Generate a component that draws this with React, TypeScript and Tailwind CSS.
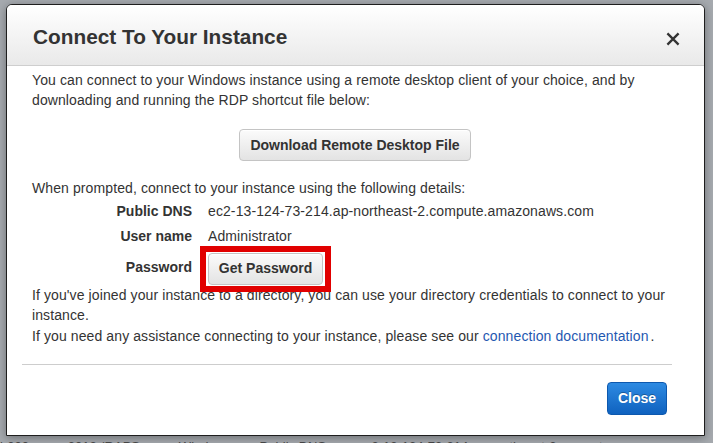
import React from 'react';

const font = { fontFamily: '"Liberation Sans", Arial, Helvetica, sans-serif' };

function CloseIcon() {
  return (
    <svg width="14" height="14" viewBox="0 0 14 14" aria-hidden="true">
      <path d="M1.4 1.4 L12.6 12.6 M12.6 1.4 L1.4 12.6" stroke="#333" strokeWidth="2.3" strokeLinecap="butt" />
    </svg>
  );
}

function GrayButton({ children, className = '' }: { children: React.ReactNode; className?: string }) {
  return (
    <button
      className={`h-[32px] rounded-[4px] border border-[#c4c4c4] bg-gradient-to-b from-[#fbfbfb] to-[#e3e3e3] text-[14px] font-bold tracking-normal text-[#333] shadow-[inset_0_1px_0_#fff] ${className}`}
    >
      {children}
    </button>
  );
}

function DetailRow({ label, children }: { label: string; children: React.ReactNode }) {
  return (
    <div className="grid grid-cols-[160px_1fr] gap-x-[16px]">
      <div className="text-right font-bold leading-[25px] tracking-normal">{label}</div>
      <div className="leading-[25px]">{children}</div>
    </div>
  );
}

export default function App() {
  return (
    <div className="h-[443px] w-[713px] overflow-hidden bg-[#a6aaaf] pl-[6px] pt-[4px] text-[#333]" style={font}>
      {/* modal */}
      <div className="flex h-[432px] w-[699px] flex-col overflow-hidden rounded-t-[6px] border border-[#1e1e1e] bg-white text-[14px] shadow-[0_2px_10px_rgba(0,0,0,0.35)]">
        <div className="flex h-[61px] shrink-0 items-center justify-between border-b border-[#cecece] bg-gradient-to-b from-white to-[#e9e9e9] pl-[26px] pr-[24px] pt-[4px]">
          <h1 className="text-[20.8px] font-bold leading-none text-[#333]">Connect To Your Instance</h1>
          <div className="mt-[3px]">
            <CloseIcon />
          </div>
        </div>

        <div className="pl-[25px] pr-[20px] pt-[4px] tracking-[0.1px]">
          <p className="leading-[20px]">
            You can connect to your Windows instance using a remote desktop client of your choice, and by
            downloading and running the RDP shortcut file below:
          </p>

          <div className="mt-[19px] flex justify-center pr-[6px]">
            <GrayButton className="w-[232px]">Download Remote Desktop File</GrayButton>
          </div>

          <p className="mt-[16.5px] leading-[20px]">When prompted, connect to your instance using the following details:</p>

          <div className="mt-[1px]">
            <DetailRow label="Public DNS">ec2-13-124-73-214.ap-northeast-2.compute.amazonaws.com</DetailRow>
            <DetailRow label="User name">Administrator</DetailRow>
            <div className="grid grid-cols-[160px_1fr] gap-x-[16px]">
              <div className="pt-[8px] text-right font-bold leading-[20px] tracking-normal">Password</div>
              <div className="pt-[4px]">
                <div className="relative inline-block">
                  <GrayButton className="w-[115px]">Get Password</GrayButton>
                  <div className="pointer-events-none absolute -bottom-[7px] -left-[8px] -right-[8px] -top-[7px] border-[6px] border-[#e10000]" />
                </div>
              </div>
            </div>
          </div>

          <p className="leading-[20.5px]">
            If you've joined your instance to a directory, you can use your directory credentials to connect to your
            instance.
            <br />
            If you need any assistance connecting to your instance, please see our{' '}
            <a className="text-[#1f58b1]">connection documentation</a>
            <span className="ml-[2px]">.</span>
          </p>
        </div>

        <div className="ml-[15px] mr-[32px] mt-[18px] border-t border-[#cdcdcd]" />

        <div className="mr-[37px] mt-[17px] flex justify-end">
          <button className="h-[33px] w-[60px] rounded-[4px] border border-[#0d58ae] bg-gradient-to-b from-[#2d8ae2] to-[#0f62bf] text-[14px] font-bold text-white [text-shadow:0_-1px_0_rgba(0,0,0,0.3)]">
            Close
          </button>
        </div>
      </div>

      {/* page content behind the modal, mostly cut off */}
      <div className="-ml-[6px] mt-[4px] flex gap-[28px] whitespace-nowrap text-[13px] leading-none text-[#444]">
        <span>i-000...</span>
        <span>2012 (RAPS...</span>
        <span>Windows</span>
        <span>Public DNS:</span>
        <span>ec2-13-124-73-214.ap-northeast-2.compute.amazonaws.com</span>
      </div>
    </div>
  );
}
